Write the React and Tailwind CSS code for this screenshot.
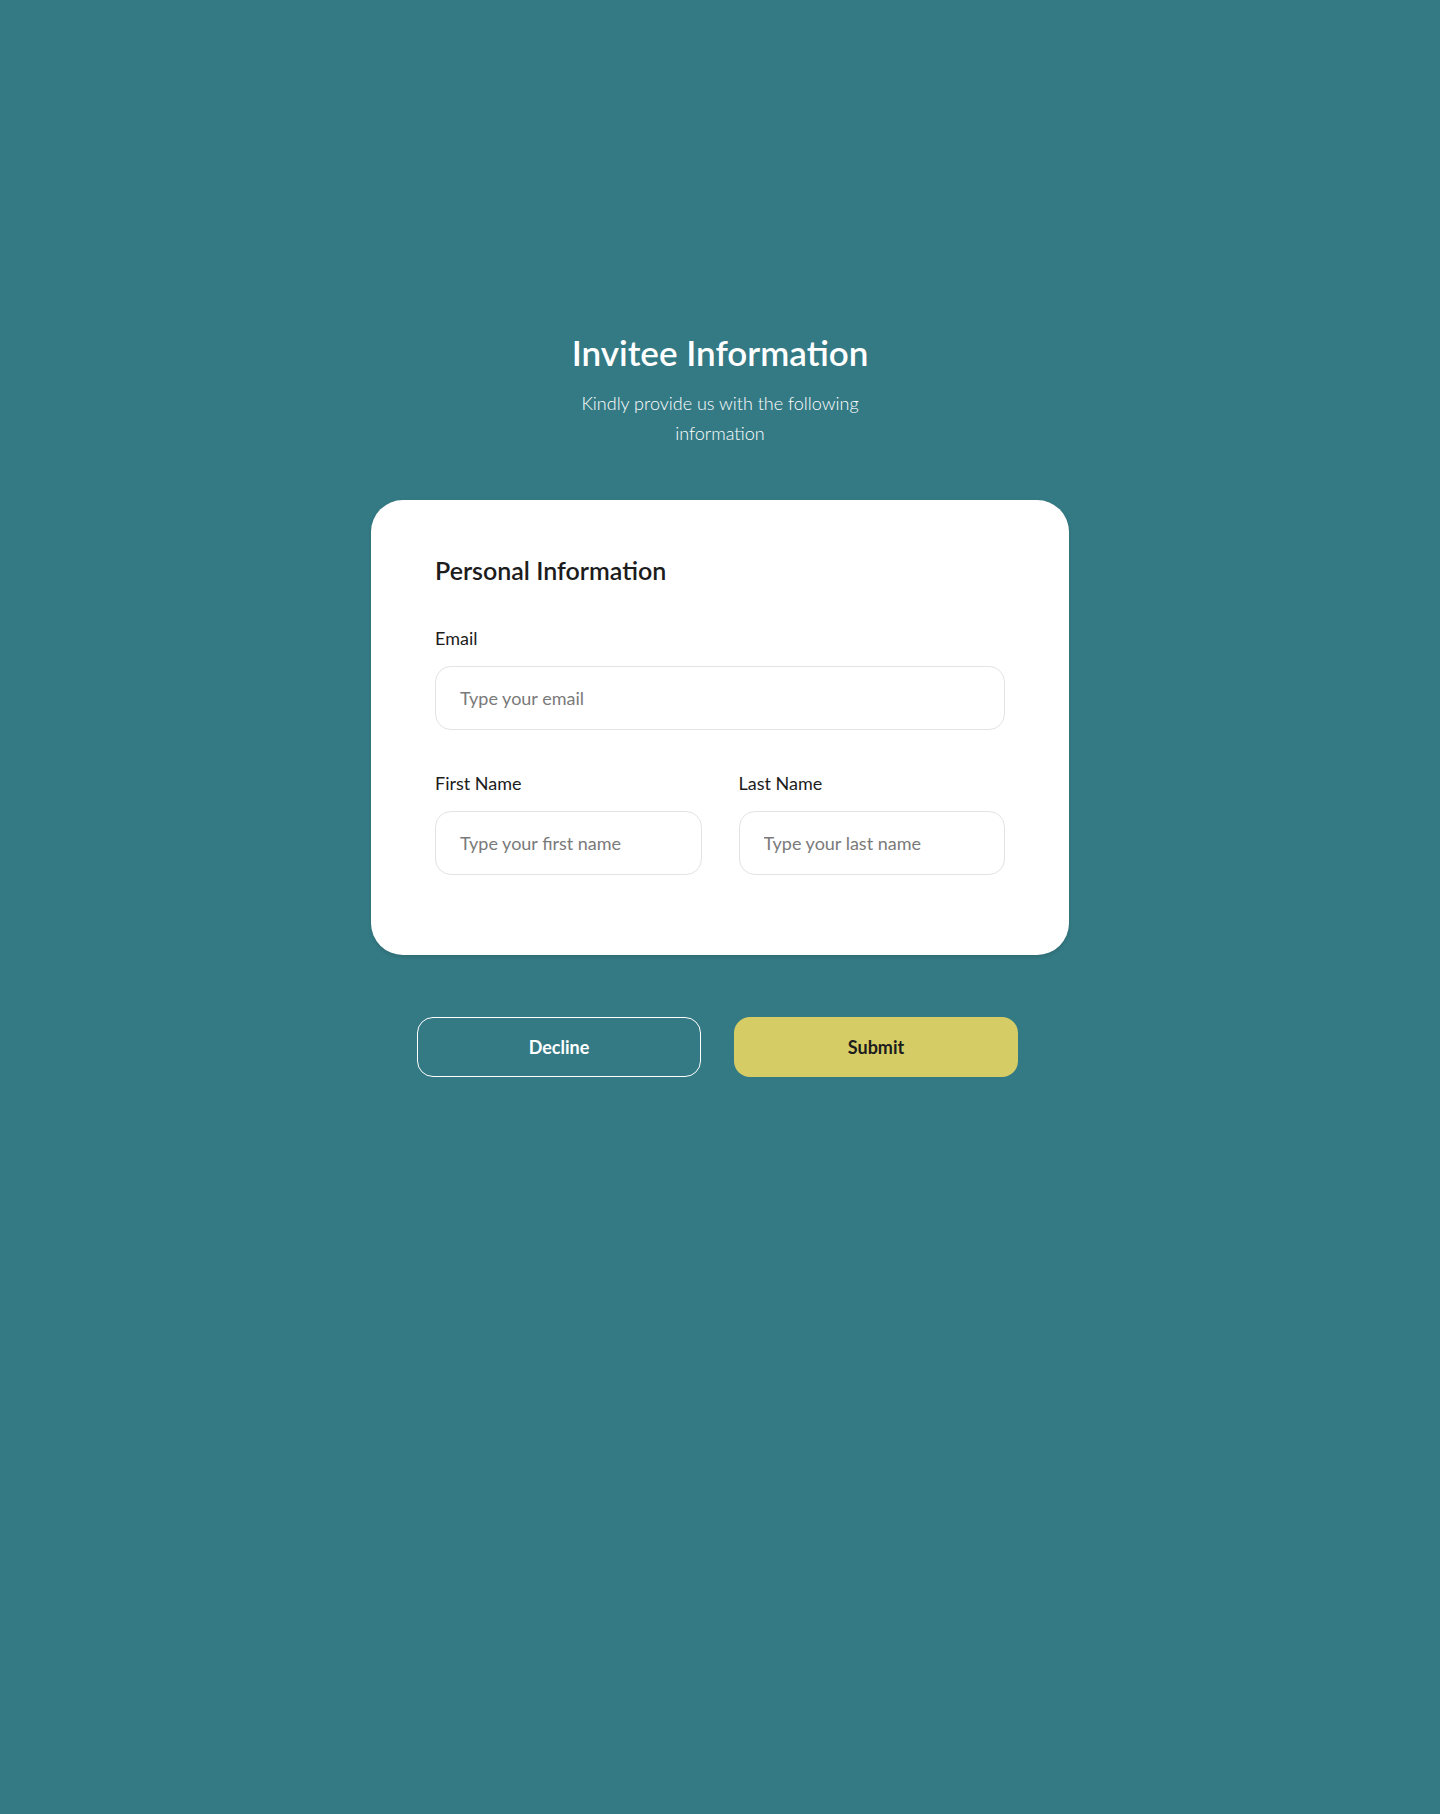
import { useState } from "react";

const fieldClass =
  "h-16 w-full rounded-2xl border border-[#e3e3e3] bg-white px-6 text-lg text-gray-900 outline-none placeholder:text-[#7a7a7a] focus:border-[#347a84]";

function Field({ label, placeholder, value, onChange, type = "text" }) {
  return (
    <label className="flex flex-col">
      <span className="text-lg text-[#1c1c1c]">{label}</span>

      <input
        type={type}
        value={value}
        onChange={(event) => onChange(event.target.value)}
        placeholder={placeholder}
        className={`mt-[14px] ${fieldClass}`}
      />
    </label>
  );
}

export default function App() {
  const [form, setForm] = useState({
    email: "",
    firstName: "",
    lastName: "",
  });

  const update = (key) => (value) =>
    setForm((current) => ({ ...current, [key]: value }));

  return (
    <div
      className="min-h-[1814px] bg-[#347a84] pt-[330px]"
      style={{ fontFamily: "Lato, 'Noto Sans', sans-serif" }}
    >
      <div className="flex flex-col items-center">
        <h1 className="text-[35px] leading-[44px] font-semibold text-white">
          Invitee Information
        </h1>

        <p className="mt-[14px] max-w-[300px] text-center text-lg leading-[30px] font-light text-white">
          Kindly provide us with the following information
        </p>

        <form
          className="mt-[52px] w-[698px] rounded-[32px] bg-white px-16 pt-[54px] pb-[80px] shadow-[0_2px_4px_rgba(0,0,0,0.12)]"
          onSubmit={(event) => event.preventDefault()}
        >
          <h2 className="text-[25px] leading-8 font-semibold text-[#1c1c1c]">
            Personal Information
          </h2>

          <div className="mt-[38px]">
            <Field
              label="Email"
              type="email"
              placeholder="Type your email"
              value={form.email}
              onChange={update("email")}
            />
          </div>

          <div className="mt-[39px] grid grid-cols-2 gap-[37px]">
            <Field
              label="First Name"
              placeholder="Type your first name"
              value={form.firstName}
              onChange={update("firstName")}
            />

            <Field
              label="Last Name"
              placeholder="Type your last name"
              value={form.lastName}
              onChange={update("lastName")}
            />
          </div>
        </form>

        <div className="mt-[62px] flex gap-[33px] pr-[5px]">
          <button
            type="button"
            className="h-[60px] w-[284px] rounded-2xl border border-white text-lg font-bold text-white"
          >
            Decline
          </button>

          <button
            type="button"
            className="h-[60px] w-[284px] rounded-2xl bg-[#d6cc66] text-lg font-bold text-[#1c1c1c]"
          >
            Submit
          </button>
        </div>
      </div>
    </div>
  );
}
